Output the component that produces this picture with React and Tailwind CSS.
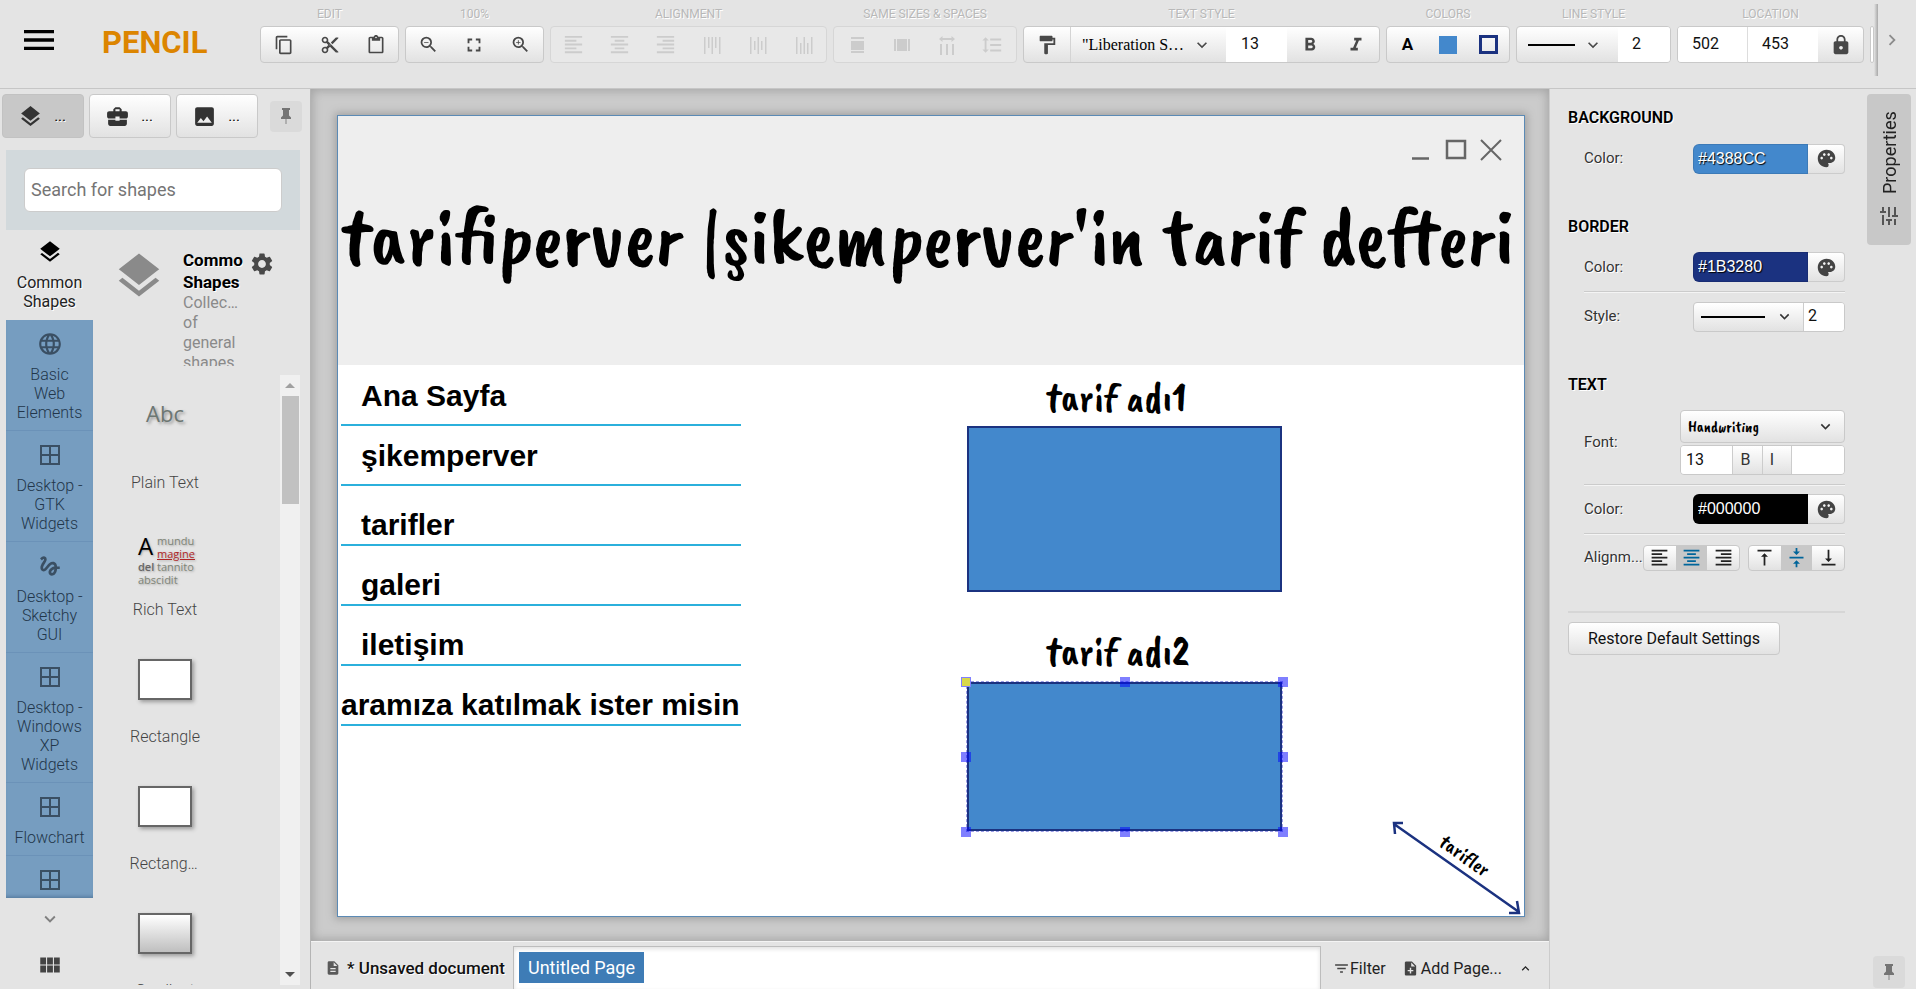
import React from "react";
import {
  MdBorderAll,
  MdBusinessCenter,
  MdContentCopy,
  MdContentCut,
  MdContentPaste,
  MdDescription,
  MdExpandLess,
  MdExpandMore,
  MdChevronRight,
  MdFilterList,
  MdFormatAlignCenter,
  MdFormatAlignLeft,
  MdFormatAlignRight,
  MdFormatBold,
  MdFormatItalic,
  MdFormatLineSpacing,
  MdFormatPaint,
  MdFullscreen,
  MdGesture,
  MdImage,
  MdLanguage,
  MdLayers,
  MdLock,
  MdMenu,
  MdNoteAdd,
  MdPalette,
  MdSettings,
  MdTune,
  MdVerticalAlignBottom,
  MdVerticalAlignCenter,
  MdVerticalAlignTop,
  MdViewModule,
  MdZoomIn,
  MdZoomOut,
} from "react-icons/md";

const emboss = "[text-shadow:1px_1px_0_#ffffff]";
const raised = "bg-linear-to-b from-white to-[#e2e2e2]";
const hand = "font-['Caveat_Brush','Liberation_Sans_Narrow',cursive] font-normal";

function Bars({ rows, size = 24 }) {
  return (
    <svg width={size} height={size} viewBox="0 0 24 24" fill="currentColor" aria-hidden="true">
      {rows.map(([x, y, w, h], i) => (
        <rect key={i} x={x} y={y} width={w} height={h} />
      ))}
    </svg>
  );
}

const alignTop = [[5, 4, 1.5, 17], [9, 4, 1.5, 11], [12.5, 4, 1.5, 17], [16, 4, 1.5, 11], [20, 4, 1.5, 17]];
const alignMiddle = [[5, 4, 1.5, 17], [9, 8, 1.5, 9], [12.5, 4, 1.5, 17], [16, 8, 1.5, 9], [20, 4, 1.5, 17]];
const alignBottom = [[5, 4, 1.5, 17], [9, 10, 1.5, 11], [12.5, 4, 1.5, 17], [16, 10, 1.5, 11], [20, 4, 1.5, 17]];
const sameWidth = [[6, 4, 13, 2], [6, 8, 13, 9], [6, 18, 13, 2]];
const sameHeight = [[4, 6, 2, 12], [7, 6, 10, 12], [18, 6, 2, 12]];

function HorizontalSpacing() {
  return (
    <svg width="24" height="24" viewBox="0 0 24 24" fill="currentColor" aria-hidden="true">
      <path d="M4 6 7.500 3v2h9V3L20 6l-3.500 3V7h-9v2zM5 11h2v11H5zM11 11h2v11h-2zM17 11h2v11h-2z" />
    </svg>
  );
}

function Pin() {
  return (
    <svg width="16" height="20" viewBox="0 0 16 20" aria-hidden="true">
      <path d="M4 2h8v2h-1v5.500l2 2V13H3v-1.500l2-2V4H4z" fill="#747474" />
      <path d="M7.200 13h1.600v5H7.200z" fill="#a4a4a4" />
    </svg>
  );
}

function Zone({ label, disabled, children, className = "" }) {
  return (
    <section aria-label={label} className={`flex shrink-0 flex-col ${className}`}>
      <h2 className={`h-[26px] pt-1 text-center text-[12px] leading-5 whitespace-nowrap text-[#b8b8b8] ${emboss}`}>{label}</h2>
      <div
        className={`flex h-[37px] overflow-hidden rounded-sm border ${
          disabled ? "border-[#d6d6d6] bg-[#e8e8e8] text-[#cccccc]" : `border-[#c9c9c9] text-[#484848] ${raised}`
        }`}
      >
        {children}
      </div>
    </section>
  );
}

function Tool({ name, children, disabled, className = "w-[46px]" }) {
  return (
    <button type="button" aria-label={name} disabled={disabled} className={`flex shrink-0 items-center justify-center ${className}`}>
      {children}
    </button>
  );
}

function NumberBox({ name, value, className }) {
  return <input aria-label={name} defaultValue={value} className={`min-w-0 bg-white text-[#111111] outline-none ${className}`} />;
}

function Toolbar() {
  return (
    <header className="flex h-[89px] shrink-0 border-b border-[#c6c6c6] bg-[#e4e4e4]">
      <div className="flex w-[260px] shrink-0 items-start pt-5 pl-[19px]">
        <button type="button" aria-label="Menu" className="text-black">
          <MdMenu size={40} />
        </button>
        <h1 className="ml-[43px] text-[31px] leading-[46px] font-bold text-[#dc8500]">PENCIL</h1>
      </div>
      <div className="flex min-w-0 flex-1 gap-[6px] overflow-hidden">
        <Zone label="EDIT" className="w-[139px]">
          <Tool name="Copy"><MdContentCopy size={20} /></Tool>
          <Tool name="Cut"><MdContentCut size={20} /></Tool>
          <Tool name="Paste"><MdContentPaste size={20} /></Tool>
        </Zone>
        <Zone label="100%" className="w-[139px]">
          <Tool name="Zoom out" className="w-11"><MdZoomOut size={21} /></Tool>
          <Tool name="Fit" className="w-12"><MdFullscreen size={22} /></Tool>
          <Tool name="Zoom in" className="w-11"><MdZoomIn size={21} /></Tool>
        </Zone>
        <Zone label="ALIGNMENT" disabled className="w-[277px]">
          <Tool disabled name="Align left" className="w-[45px]"><MdFormatAlignLeft size={23} /></Tool>
          <Tool disabled name="Align center"><MdFormatAlignCenter size={23} /></Tool>
          <Tool disabled name="Align right"><MdFormatAlignRight size={23} /></Tool>
          <Tool disabled name="Align top"><Bars rows={alignTop} /></Tool>
          <Tool disabled name="Align middle"><Bars rows={alignMiddle} /></Tool>
          <Tool disabled name="Align bottom"><Bars rows={alignBottom} /></Tool>
        </Zone>
        <Zone label="SAME SIZES & SPACES" disabled className="w-[184px]">
          <Tool disabled name="Same width"><Bars rows={sameWidth} /></Tool>
          <Tool disabled name="Same height" className="w-11"><Bars rows={sameHeight} /></Tool>
          <Tool disabled name="Horizontal spacing"><HorizontalSpacing /></Tool>
          <Tool disabled name="Vertical spacing" className="w-11"><MdFormatLineSpacing size={22} /></Tool>
        </Zone>
        <Zone label="TEXT STYLE" className="w-[357px]">
          <Tool name="Format painter"><MdFormatPaint size={22} /></Tool>
          <label className="grid w-[156px] shrink-0 items-center border-l border-[#d4d4d4]">
            <select aria-label="Font" className="col-start-1 row-start-1 h-full w-full appearance-none truncate pr-8 pl-[11px] font-['Liberation_Serif',serif] text-[16px] text-black outline-none">
              <option>"Liberation S…</option>
            </select>
            <MdExpandMore size={20} className="pointer-events-none col-start-1 row-start-1 mr-[14px] justify-self-end" />
          </label>
          <NumberBox name="Font size" value="13" className="w-[62px] px-[15px] pb-[2px] text-[16px]" />
          <Tool name="Bold"><MdFormatBold size={22} /></Tool>
          <Tool name="Italic"><MdFormatItalic size={22} /></Tool>
        </Zone>
        <Zone label="COLORS" className="w-[124px]">
          <Tool name="Text color" className="w-[41px]"><span className="text-[17px] font-bold text-black">A</span></Tool>
          <Tool name="Fill color" className="w-10"><span className="size-[18px] bg-[#4388cc]" /></Tool>
          <Tool name="Border color" className="w-[41px]"><span className="size-[19px] border-3 border-[#1b3280]" /></Tool>
        </Zone>
        <Zone label="LINE STYLE" className="w-[155px]">
          <button type="button" aria-label="Line style" aria-haspopup="listbox" className="flex w-[101px] shrink-0 items-center gap-2 pl-[11px]">
            <span className="h-[2px] w-[47px] bg-black" />
            <MdExpandMore size={20} />
          </button>
          <NumberBox name="Line width" value="2" className="w-[53px] px-[14px] pb-[2px] text-[16px]" />
        </Zone>
        <Zone label="LOCATION" className="w-[187px]">
          <NumberBox name="X" value="502" className="w-[70px] border-r border-[#dddddd] px-[14px] pb-[2px] text-[16px]" />
          <NumberBox name="Y" value="453" className="w-[70px] px-[14px] pb-[2px] text-[16px]" />
          <Tool name="Lock" className="w-[45px]"><MdLock size={22} /></Tool>
        </Zone>
        <div className="mt-[26px] h-[37px] w-20 rounded-md border border-[#c9c9c9] bg-white" />
      </div>
      <div className="mt-1 h-[72px] w-1 shrink-0 bg-linear-to-r from-transparent to-[#a8a8a8]" />
      <button type="button" aria-label="Scroll toolbar" className="flex h-20 w-[38px] shrink-0 items-center justify-start pl-[3px] text-[#8c8c8c]">
        <MdChevronRight size={22} />
      </button>
    </header>
  );
}

const categories = [
  { icon: MdLanguage, name: "Basic Web Elements" },
  { icon: MdBorderAll, name: "Desktop - GTK Widgets" },
  { icon: MdGesture, name: "Desktop - Sketchy GUI" },
  { icon: MdBorderAll, name: "Desktop - Windows XP Widgets" },
  { icon: MdBorderAll, name: "Flowchart" },
  { icon: MdBorderAll, name: "" },
];

function WindowIcon() {
  return (
    <svg width="26" height="26" viewBox="0 0 26 26" fill="none" stroke="currentColor" strokeWidth="2" aria-hidden="true">
      <path d="M4 4h18v18H4zM13 4v18M4 13h18" />
    </svg>
  );
}

function Category({ icon: Icon, name }) {
  return (
    <button type="button" aria-label={name || "More"} className="flex w-full shrink-0 flex-col items-center border-b border-[#6b92b8] px-2 pt-[11px] pb-2 text-[#3a4f63]">
      {Icon === MdBorderAll ? <WindowIcon /> : <Icon size={26} />}
      <span className="mt-2 text-center text-[16px] leading-[19px] font-light text-[#22364a]">{name}</span>
    </button>
  );
}

function TabButton({ icon: Icon, name, active }) {
  return (
    <button
      type="button"
      aria-label={name}
      className={`flex h-[44px] w-[82px] items-center justify-between rounded-sm border pr-[17px] pl-[15px] text-[#333333] ${
        active ? "border-[#c2c2c2] bg-[#c8c8c8]" : `border-[#c9c9c9] ${raised}`
      }`}
    >
      <Icon size={25} />
      <span className={`text-[15px] text-black ${emboss}`}>...</span>
    </button>
  );
}

function ShapeItem({ name, children }) {
  return (
    <li className="flex h-[127px] shrink-0 flex-col items-center">
      <div className="flex h-[98px] items-center justify-center pt-[2px]">{children}</div>
      <span className="w-[71px] truncate text-center text-[16px] leading-5 font-light text-[#444444]">{name}</span>
    </li>
  );
}

function Shapes() {
  return (
    <ul className="flex w-[118px] min-w-0 flex-col overflow-hidden">
      <ShapeItem name="Plain Text">
        <span className="pb-6 font-['Open_Sans',sans-serif] text-[22px] font-medium text-[#6c7672] [text-shadow:2px_2px_3px_#999999]">Abc</span>
      </ShapeItem>
      <ShapeItem name="Rich Text">
        <div className="grid w-[58px] grid-cols-[19px_1fr] pt-4 pl-[2px] font-['Open_Sans',sans-serif] text-[11px] leading-[13px] whitespace-nowrap text-[#7f8577] [text-shadow:1px_1px_2px_#aaaaaa]">
          <span className="row-span-2 text-[24px] leading-6 font-medium text-black">A</span>
          <span>mundu</span>
          <span className="font-medium text-[#b02626] underline">magine</span>
          <b className="font-semibold text-[#666666]">del</b>
          <span>tannito</span>
          <span className="col-span-2">abscidit</span>
        </div>
      </ShapeItem>
      <ShapeItem name="Rectangle">
        <div className="h-[41px] w-[54px] border-2 border-[#666666] bg-white shadow-[2px_2px_4px_#999999]" />
      </ShapeItem>
      <ShapeItem name="Rectangle (rounded)">
        <div className="h-[41px] w-[54px] border-2 border-[#666666] bg-white shadow-[2px_2px_4px_#999999]" />
      </ShapeItem>
      <ShapeItem name="Gradient">
        <div className="h-[41px] w-[54px] border-2 border-[#666666] bg-linear-to-b from-white to-[#bfbfbf] shadow-[2px_2px_4px_#999999]" />
      </ShapeItem>
    </ul>
  );
}

function LeftPanel() {
  return (
    <aside className="flex w-[311px] shrink-0 flex-col border-r border-[#b4b4b4] pt-[5px]">
      <div className="flex items-center gap-[5px] pl-[2px]">
        <TabButton icon={MdLayers} name="Shapes" active />
        <TabButton icon={MdBusinessCenter} name="My stuff" />
        <TabButton icon={MdImage} name="Clipart" />
        <button type="button" aria-label="Pin panel" className="ml-[7px] flex h-[31px] w-8 items-center justify-center rounded-sm bg-[#dadada]"><Pin /></button>
      </div>
      <div className="mt-3 mr-[10px] ml-[6px] flex h-20 shrink-0 items-center bg-[#d2d9dc] px-[18px]">
        <input aria-label="Search for shapes" placeholder="Search for shapes" className="h-[44px] w-full rounded-md border border-[#cccccc] bg-white px-[6px] pb-[2px] text-[18px] outline-none placeholder:text-[#757575]" />
      </div>
      <div className="mr-[10px] ml-[6px] flex min-h-0 flex-1">
        <div className="flex w-[87px] shrink-0 flex-col">
          <button type="button" className={`flex h-[90px] shrink-0 flex-col items-center pt-[9px] text-black ${emboss}`}>
            <MdLayers size={26} />
            <span className="mt-2 text-center text-[16px] leading-[19px] text-[#222222]">Common Shapes</span>
          </button>
          <nav className="flex min-h-0 flex-1 flex-col overflow-hidden bg-[#769dc0] shadow-[inset_0_-4px_4px_-3px_#4f7396]">
            {categories.map((c, i) => <Category key={i} {...c} />)}
          </nav>
          <button type="button" aria-label="Scroll down" className="flex h-[42px] shrink-0 items-center justify-center text-[#808080]"><MdExpandMore size={22} /></button>
          <button type="button" aria-label="Collections" className="flex h-[49px] shrink-0 items-center justify-center text-[#444444]"><MdViewModule size={26} /></button>
        </div>
        <div className="flex min-w-0 flex-1 flex-col">
          <div className="flex h-[145px] shrink-0 items-start pt-[19px] pl-[19px]">
            <MdLayers size={54} className="shrink-0 text-[#8a8a8a]" />
            <div className="ml-[17px] h-[117px] w-[60px] overflow-hidden">
              <h2 className={`text-[17px] leading-[22px] font-bold text-black ${emboss}`}>Common Shapes</h2>
              <p className="text-[16px] leading-5 text-[#8a8a8a]"><span className="block truncate">Collection</span> of general shapes</p>
            </div>
            <button type="button" aria-label="Settings" className="mt-[2px] ml-[6px] text-[#484848]"><MdSettings size={26} /></button>
          </div>
          <div className="mb-1 flex min-h-0 flex-1 justify-between pl-[13px]">
            <Shapes />
            <div className="flex w-5 flex-col items-center bg-[#f0f0f0]">
              <span className="flex h-[21px] shrink-0 items-center"><svg width="10" height="5" aria-hidden="true"><path d="M5 0l5 5H0z" fill="#a0a0a0" /></svg></span>
              <span className="h-[108px] w-[17px] bg-[#c1c1c1]" />
              <span className="mt-auto flex h-[21px] shrink-0 items-center"><svg width="10" height="5" aria-hidden="true"><path d="M5 5l5-5H0z" fill="#505050" /></svg></span>
            </div>
          </div>
        </div>
      </div>
    </aside>
  );
}

const menu = [
  { text: "Ana Sayfa", textTop: 260, lineTop: 308 },
  { text: "şikemperver", textTop: 320, lineTop: 368 },
  { text: "tarifler", textTop: 389, lineTop: 428 },
  { text: "galeri", textTop: 449, lineTop: 488 },
  { text: "iletişim", textTop: 509, lineTop: 548 },
  { text: "aramıza katılmak ister misin", textTop: 569, lineTop: 608, wide: true },
];

const handles = [
  [0, 0], [159, 0], [317, 0], [0, 75], [317, 75], [0, 150], [159, 150], [317, 150],
];

function Page() {
  return (
    <div className="relative min-w-0 flex-1 overflow-hidden border border-[#5b8ab5] bg-white shadow-[0_0_8px_2px_#a0a0a0]">
      <div className="h-[249px] bg-[#eeeeee]" />
      <svg className="absolute top-[22px] left-[1074px]" width="92" height="24" fill="none" stroke="#666666" strokeWidth="2" aria-hidden="true">
        <path d="M0 20.500h17" strokeWidth="2.500" />
        <path d="M35 3h18v17H35z" strokeWidth="2.500" />
        <path d="M69 2l20 20M89 2L69 22" />
      </svg>
      <div className={`absolute top-[79px] left-[3px] text-[83px] leading-[84px] whitespace-nowrap text-black ${hand}`}>
        tarifiperver |şikemperver'in tarif defteri
      </div>
      {menu.map((m) => (
        <React.Fragment key={m.text}>
          <div
            className={`absolute font-['Liberation_Sans',sans-serif] text-[30px] leading-[40px] font-bold whitespace-nowrap text-black ${m.wide ? "left-[3px]" : "left-[23px]"}`}
            style={{ top: m.textTop }}
          >
            {m.text}
          </div>
          <div className="absolute left-[3px] h-[2px] w-[400px] bg-[#2bb0dc]" style={{ top: m.lineTop }} />
        </React.Fragment>
      ))}
      <div className={`absolute top-[261px] left-[708px] text-[42px] leading-[42px] whitespace-nowrap text-black ${hand}`}>tarif adı1</div>
      <div className="absolute top-[310px] left-[629px] h-[166px] w-[315px] border-2 border-[#1b3280] bg-[#4388cc]" />
      <div className={`absolute top-[515px] left-[708px] text-[42px] leading-[42px] whitespace-nowrap text-black ${hand}`}>tarif adı2</div>
      <div className="absolute top-[566px] left-[629px] h-[149px] w-[315px] border-2 border-[#1b3280] bg-[#4388cc] outline-1 outline-[#9c9ce6] outline-dashed">
        {handles.map(([x, y], i) => (
          <span key={i} className={`absolute size-[10px] ${i === 0 ? "border border-[#8080ff] bg-[#d8d84a]" : "bg-[#0000ff]/50"}`} style={{ left: x - 8, top: y - 7 }} />
        ))}
      </div>
      <svg className="absolute top-[690px] left-[1040px]" width="146" height="110" aria-hidden="true">
        <path d="M16 18l125 88M25 17H16l1 11M131 107h10l-2-12" fill="none" stroke="#1b3280" strokeWidth="2.500" />
        <text x="83" y="55" transform="rotate(35 83 55)" textAnchor="middle" fontSize="21" className={hand} fill="#000000">tarifler</text>
      </svg>
    </div>
  );
}

function StatusBar() {
  return (
    <footer className="flex h-12 shrink-0 border-t border-[#f4f4f4] bg-[#e4e4e4] text-[#444444]">
      <div className="flex w-[202px] shrink-0 items-center gap-[6px] pt-1 pl-[14px]">
        <MdDescription size={16} className="text-[#5a5a5a]" />
        <span className={`text-[17px] leading-5 font-medium whitespace-nowrap text-[#111111] ${emboss}`}>* Unsaved document</span>
      </div>
      <div className="mt-1 flex min-w-0 flex-1 border border-b-0 border-[#bdbdbd] bg-white pt-[5px] pl-[5px] shadow-[inset_0_2px_4px_#e0e0e0]">
        <button type="button" className="h-[31px] bg-[#3e7cb6] px-[9px] text-[18px] leading-[30px] whitespace-nowrap text-white">Untitled Page</button>
      </div>
      <div className="flex w-[228px] shrink-0 items-center justify-between pt-[6px] pr-4 pl-3 text-[16px] text-[#222222]">
        <button type="button" className="flex items-center whitespace-nowrap"><MdFilterList size={17} className="text-[#444444]" />Filter</button>
        <button type="button" className="flex items-center gap-[2px] whitespace-nowrap"><MdNoteAdd size={17} className="text-[#444444]" />Add Page...</button>
        <button type="button" aria-label="Expand"><MdExpandLess size={15} /></button>
      </div>
    </footer>
  );
}

const heading = `text-[16px] leading-5 font-semibold text-black ${emboss}`;

function Row({ label, children, last, className = "h-[49px]" }) {
  return (
    <div className={`ml-4 flex items-center justify-between text-[15px] text-[#333333] ${last ? "" : "border-b border-[#cbcbcb] shadow-[0_1px_0_#f4f4f4]"} ${className}`}>
      <span className={emboss}>{label}</span>
      {children}
    </div>
  );
}

function ColorField({ name, value, bg }) {
  return (
    <div className="flex h-[30px] w-[152px]">
      <input aria-label={name} defaultValue={value} className={`w-[115px] rounded-l-md border border-black/10 px-[4px] font-['Liberation_Sans',sans-serif] text-[16px] text-white outline-none [text-shadow:1px_1px_1px_#000000] ${bg}`} />
      <button type="button" aria-label="Pick color" className={`flex flex-1 items-center justify-center rounded-r-sm border border-l-0 border-[#cccccc] text-[#444444] ${raised}`}>
        <MdPalette size={21} />
      </button>
    </div>
  );
}

function AlignGroup({ items }) {
  return (
    <div className={`flex h-[26px] w-[97px] overflow-hidden rounded-sm border border-[#c9c9c9] ${raised}`}>
      {items.map(({ icon: Icon, name }, i) => (
        <button key={name} type="button" aria-label={name} className={`flex flex-1 items-center justify-center ${i === 1 ? "bg-[#c8c8c8] text-[#00659a]" : "text-[#222222]"}`}>
          <Icon size={21} />
        </button>
      ))}
    </div>
  );
}

function RightPanel() {
  return (
    <aside className="flex w-[367px] shrink-0 border-l border-[#cccccc] bg-[#e4e4e4]">
      <div className="flex flex-1 flex-col pt-[19px] pl-[18px]">
        <h2 className={heading}>BACKGROUND</h2>
        <Row label="Color:" last className="mt-[6px] h-[49px]"><ColorField name="Background color" value="#4388CC" bg="bg-[#4388cc]" /></Row>
        <h2 className={`mt-[34px] ${heading}`}>BORDER</h2>
        <Row label="Color:" className="mt-[6px] h-[49px]"><ColorField name="Border color" value="#1B3280" bg="bg-[#1b3280]" /></Row>
        <Row label="Style:" last>
          <div className={`flex h-[30px] w-[152px] overflow-hidden rounded-sm border border-[#c9c9c9] ${raised}`}>
            <button type="button" aria-label="Border style" aria-haspopup="listbox" className="flex w-[109px] items-center gap-[10px] pl-[7px]">
              <span className="h-[2px] w-16 bg-black" />
              <MdExpandMore size={19} />
            </button>
            <NumberBox name="Border width" value="2" className="flex-1 border-l border-[#cccccc] px-1 pb-[1px] text-[16px]" />
          </div>
        </Row>
        <h2 className={`mt-[34px] ${heading}`}>TEXT</h2>
        <Row label="Font:" className="mt-[6px] h-[84px]">
          <div className="flex w-[165px] flex-col gap-[2px]">
            <label className={`grid h-[33px] items-center rounded-sm border border-[#c9c9c9] ${raised}`}>
              <select aria-label="Text font" className={`col-start-1 row-start-1 h-full w-full appearance-none pl-[7px] text-[16px] text-black outline-none ${hand}`}>
                <option>Handwriting</option>
              </select>
              <MdExpandMore size={19} className="pointer-events-none col-start-1 row-start-1 mr-[9px] justify-self-end" />
            </label>
            <div className={`flex h-[30px] overflow-hidden rounded-sm border border-[#c9c9c9] text-[16px] ${raised}`}>
              <NumberBox name="Text size" value="13" className="w-[51px] px-[5px]" />
              <button type="button" className="w-[30px] border-l border-[#cccccc] pr-1">B</button>
              <button type="button" className="w-[30px] border-x border-[#cccccc] pr-[10px]">I</button>
              <NumberBox name="Text option" value="" className="flex-1" />
            </div>
          </div>
        </Row>
        <Row label="Color:"><ColorField name="Text color" value="#000000" bg="bg-black" /></Row>
        <Row label="Alignm..." last className="h-[47px]">
          <div className="flex gap-2">
            <AlignGroup items={[{ icon: MdFormatAlignLeft, name: "Left" }, { icon: MdFormatAlignCenter, name: "Center" }, { icon: MdFormatAlignRight, name: "Right" }]} />
            <AlignGroup items={[{ icon: MdVerticalAlignTop, name: "Top" }, { icon: MdVerticalAlignCenter, name: "Middle" }, { icon: MdVerticalAlignBottom, name: "Bottom" }]} />
          </div>
        </Row>
        <hr className="mt-[30px] h-[2px] border-0 bg-[#d6d6d6]" />
        <button type="button" className={`mt-[9px] h-[33px] w-[212px] rounded-sm border border-[#c9c9c9] text-[16px] text-[#111111] ${raised}`}>Restore Default Settings</button>
      </div>
      <div className="flex w-[71px] shrink-0 flex-col items-end justify-between pt-[5px] pr-[5px] pb-[1px]">
        <button type="button" className="flex h-[151px] w-11 rotate-180 items-center gap-[10px] rounded-sm bg-[#c8c8c8] pt-[17px] text-[18px] text-[#222222] [writing-mode:vertical-rl]">
          <MdTune size={24} className="rotate-90 text-[#555555]" />
          Properties
        </button>
        <button type="button" aria-label="Pin properties" className="mr-[6px] flex h-8 w-8 items-center justify-center rounded-sm bg-[#dadada]"><Pin /></button>
      </div>
    </aside>
  );
}

export default function App() {
  return (
    <div className="flex h-screen flex-col overflow-hidden bg-[#e4e4e4] font-['Roboto',sans-serif]">
      <Toolbar />
      <div className="flex min-h-0 flex-1">
        <LeftPanel />
        <main className="flex min-w-0 flex-1 flex-col">
          <div className="flex min-h-0 flex-1 bg-[#cbcbcb] pt-[26px] pr-6 pb-6 pl-[26px] shadow-[inset_0_0_10px_2px_#a6a6a6]">
            <Page />
          </div>
          <StatusBar />
        </main>
        <RightPanel />
      </div>
    </div>
  );
}
